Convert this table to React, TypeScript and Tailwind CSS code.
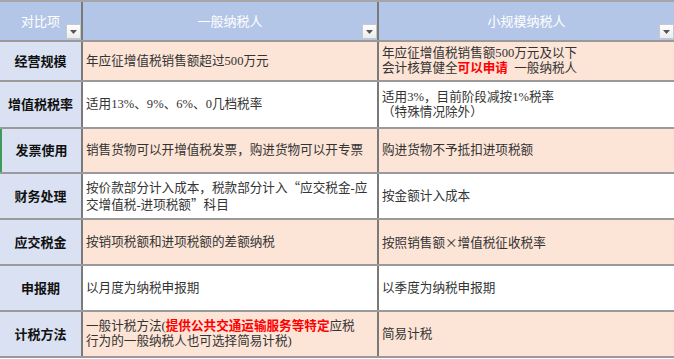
import React from "react";

type Row = {
  label: string;
  h: string;
  bg: string;
  general: React.ReactNode;
  small: React.ReactNode;
  mark?: boolean;
};

const Red = ({ children }: { children: React.ReactNode }) => (
  <span className="font-bold text-[#ff0000]">{children}</span>
);

// full-width punctuation should come from the CJK font
const Cjk = ({ children }: { children: React.ReactNode }) => (
  <span className="font-['Noto_Sans_CJK_SC',sans-serif]">{children}</span>
);

const rows: Row[] = [
  {
    label: "经营规模",
    h: "h-[40px]",
    bg: "bg-[#fce4d6]",
    general: "年应征增值税销售额超过500万元",
    small: (
      <>
        年应征增值税销售额500万元及以下
        <br />
        会计核算健全<Red>可以申请</Red>{"\u00a0\u00a0"}一般纳税人
      </>
    ),
  },
  {
    label: "增值税税率",
    h: "h-[47px]",
    bg: "bg-white",
    general: "适用13%、9%、6%、0几档税率",
    small: (
      <>
        适用3%，目前阶段减按1%税率
        <br />
        （特殊情况除外）
      </>
    ),
  },
  {
    label: "发票使用",
    h: "h-[45px]",
    bg: "bg-[#fce4d6]",
    general: "销售货物可以开增值税发票，购进货物可以开专票",
    small: "购进货物不予抵扣进项税额",
    mark: true,
  },
  {
    label: "财务处理",
    h: "h-[46px]",
    bg: "bg-white",
    general: (
      <>
        按价款部分计入成本，税款部分计入<Cjk>“</Cjk>应交税金-应
        <br />
        交增值税-进项税额<Cjk>”</Cjk>科目
      </>
    ),
    small: "按金额计入成本",
  },
  {
    label: "应交税金",
    h: "h-[46px]",
    bg: "bg-[#fce4d6]",
    general: "按销项税额和进项税额的差额纳税",
    small: (
      <>
        按照销售额<Cjk>×</Cjk>增值税征收税率
      </>
    ),
  },
  {
    label: "申报期",
    h: "h-[46px]",
    bg: "bg-white",
    general: "以月度为纳税申报期",
    small: "以季度为纳税申报期",
  },
  {
    label: "计税方法",
    h: "h-[46px]",
    bg: "bg-[#fce4d6]",
    general: (
      <>
        一般计税方法(<Red>提供公共交通运输服务等特定</Red>应税
        <br />
        行为的一般纳税人也可选择简易计税)
      </>
    ),
    small: "简易计税",
  },
];

function FilterButton() {
  return (
    <div className="absolute right-0 bottom-[1px] flex h-[15px] w-[15px] items-center justify-center border border-[#c8c8c8] bg-gradient-to-b from-white to-[#ececec]">
      <svg width="7" height="4" viewBox="0 0 7 4">
        <path d="M0 0h7L3.5 4z" fill="#555" />
      </svg>
    </div>
  );
}

export default function App() {
  return (
    <div className="w-[674px] h-[359px] overflow-hidden bg-white border-t-2 border-[#a6a6a6] font-['Liberation_Serif','Noto_Sans_CJK_SC',serif] text-[12.6px] leading-[15px] text-[#333]">
      <div className="grid h-[40px] grid-cols-[83px_296px_1fr] border-b-2 border-[#9a9a9a] bg-[#b4c6e7] text-[13px] text-white">
        <div className="relative flex items-center justify-center border-r-2 border-[#7a7a7a]">
          对比项
          <FilterButton />
        </div>
        <div className="relative flex items-center justify-center border-r-2 border-[#7a7a7a]">
          一般纳税人
          <FilterButton />
        </div>
        <div className="relative flex items-center justify-center">
          小规模纳税人
          <FilterButton />
        </div>
      </div>

      {rows.map((r) => (
        <div
          key={r.label}
          className={`grid grid-cols-[83px_296px_1fr] border-b-2 border-[#9a9a9a] ${r.h}`}
        >
          <div
            className={`flex items-center justify-center border-r-2 border-[#7a7a7a] bg-[#d9e1f2] text-[13px] font-bold text-[#111] ${
              r.mark ? "border-l-2 border-l-[#3f9b5a]" : ""
            }`}
          >
            {r.label}
          </div>
          <div className={`flex items-center border-r-2 border-[#7a7a7a] pl-[3px] ${r.bg}`}>
            <div>{r.general}</div>
          </div>
          <div className={`flex items-center pl-[3px] ${r.bg}`}>
            <div>{r.small}</div>
          </div>
        </div>
      ))}
    </div>
  );
}
